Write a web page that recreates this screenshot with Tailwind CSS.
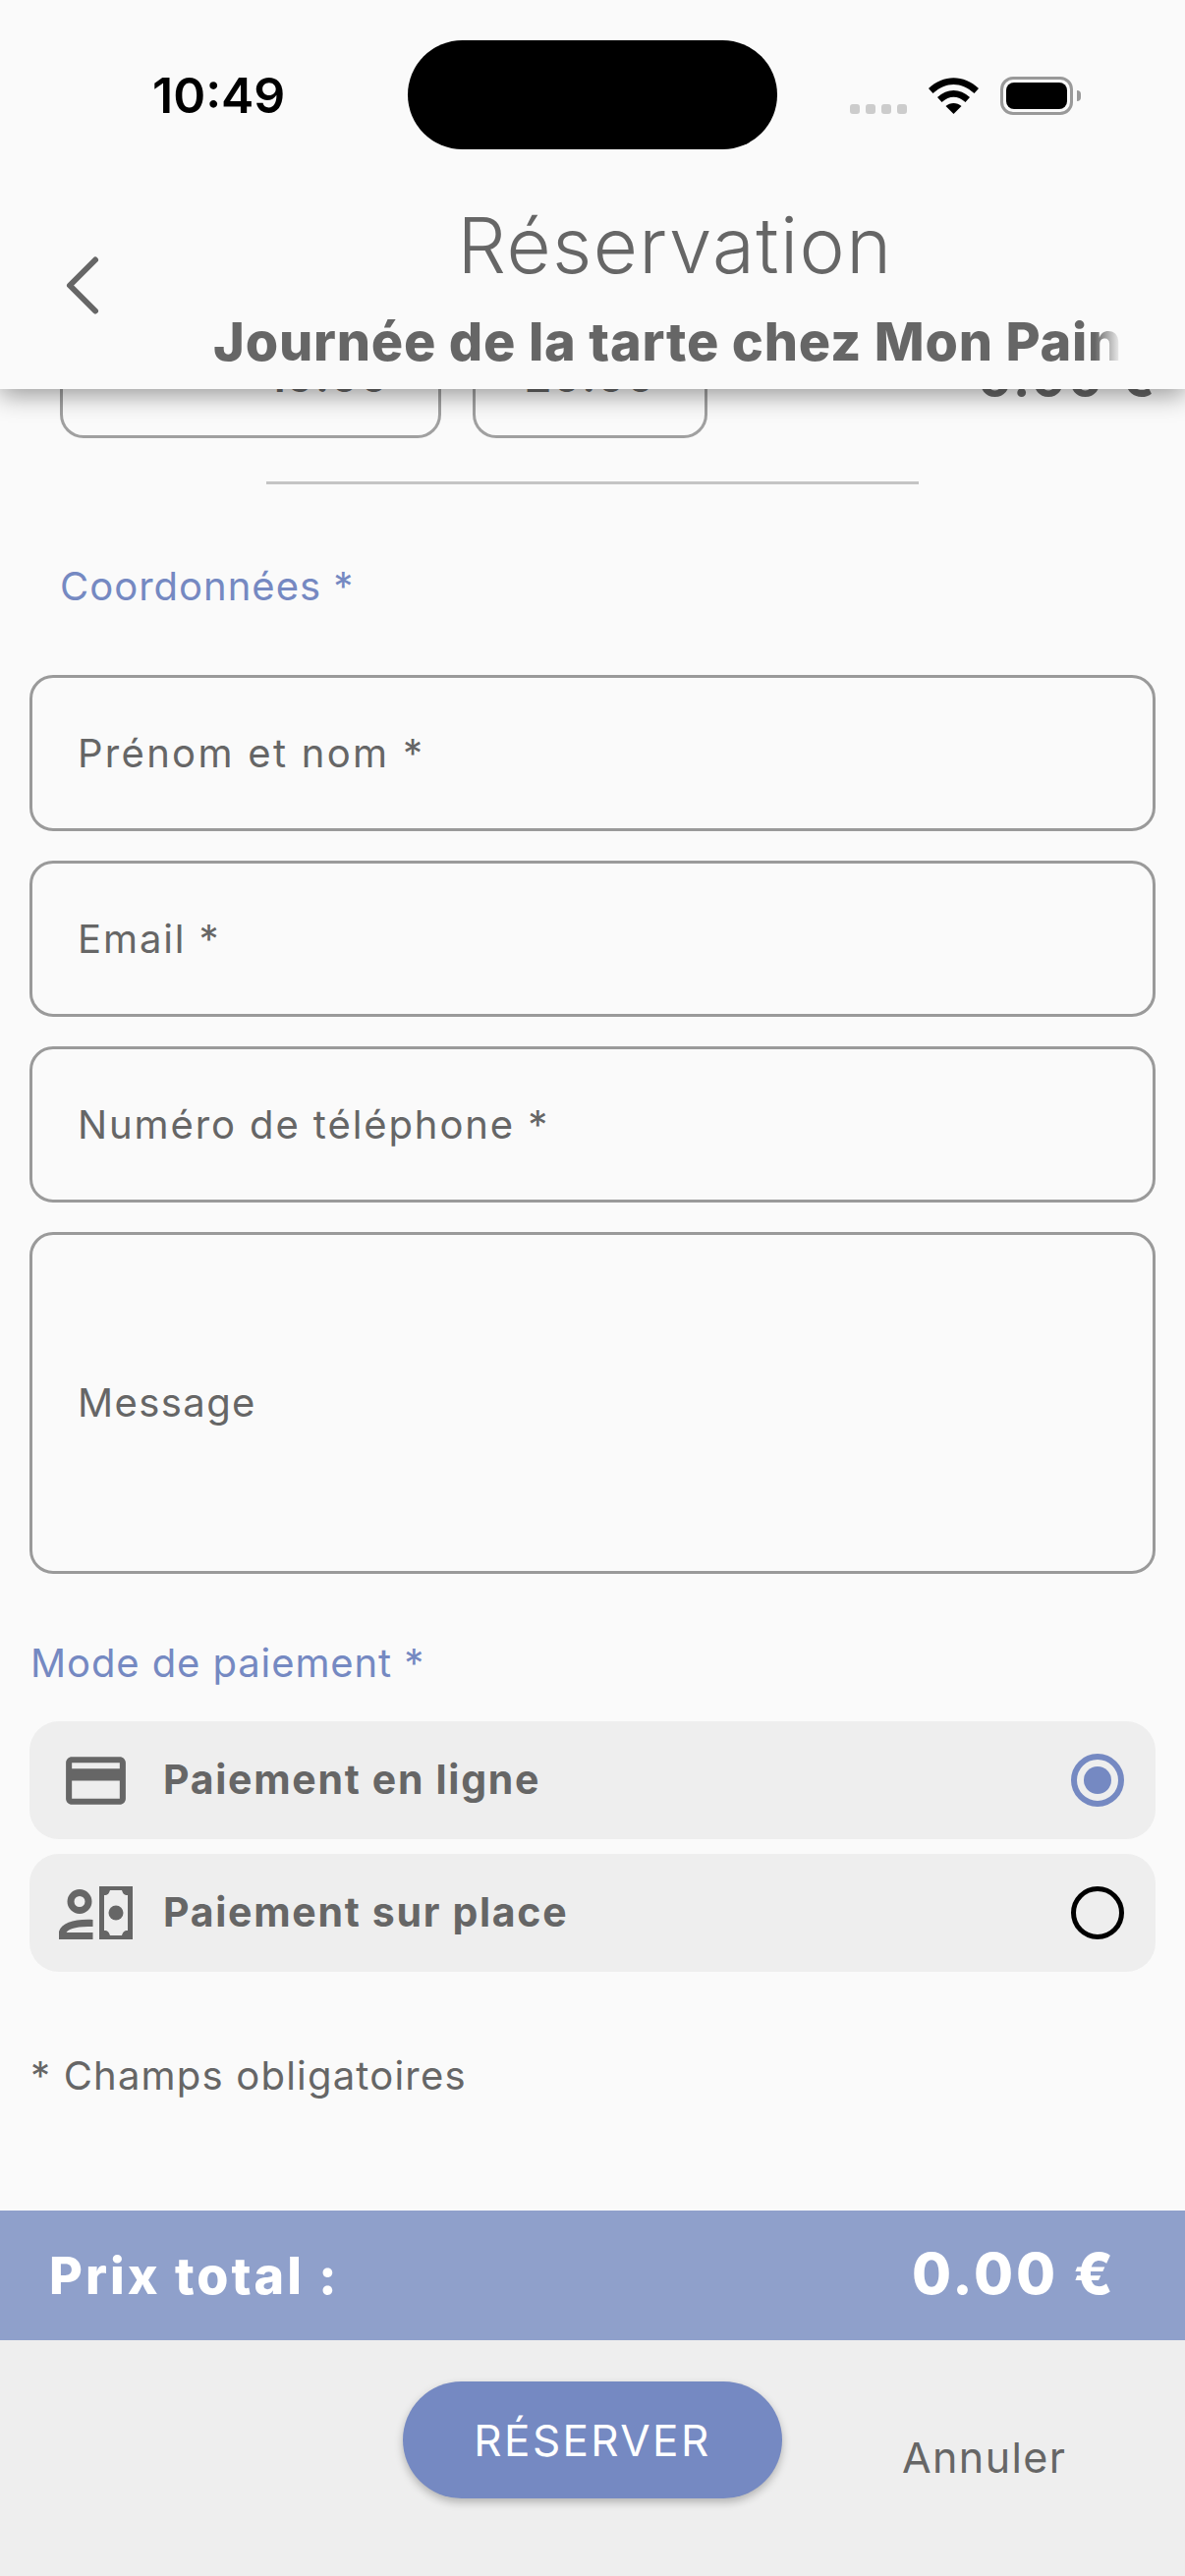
<!DOCTYPE html>
<html lang="fr">
<head>
    <meta charset="UTF-8">
    <title>Réservation</title>
    <script src="https://cdn.jsdelivr.net/npm/@tailwindcss/browser@4"></script>
</head>
<body class="bg-[#fafafa] font-['Inter',sans-serif] text-[#666666]">
<div class="w-[1206px] h-[2622px] flex flex-col overflow-hidden relative">

    <!-- app bar, lies over the scrolled content -->
    <header class="h-[396px] shrink-0 bg-[#fafafa] relative z-10 shadow-[0_6px_24px_rgba(0,0,0,0.4)]">
        <div class="flex items-start h-[160px]">
            <span class="ml-[155px] mt-[67px] w-[135px] text-[50px] leading-[60px] font-semibold text-black whitespace-nowrap">10:49</span>
            <div class="ml-[125px] mt-[41px] w-[376px] h-[111px] rounded-full bg-black"></div>
            <div class="ml-[74px] mt-[106px] flex gap-[6px]">
                <i class="w-[10px] h-[10px] rounded-[3px] bg-[#cccccc]"></i>
                <i class="w-[10px] h-[10px] rounded-[3px] bg-[#cccccc]"></i>
                <i class="w-[10px] h-[10px] rounded-[3px] bg-[#cccccc]"></i>
                <i class="w-[10px] h-[10px] rounded-[3px] bg-[#cccccc]"></i>
            </div>
            <svg class="ml-[22px] mt-[79px]" width="51" height="37" viewBox="0 0 51 37" fill="#000">
                <path d="M0 11 C15 -3.500 36 -3.500 51 11 L46.500 16 C33 4 18 4 4.500 16 Z"/>
                <path d="M9 20 C19 10.500 32 10.500 42 20 L37.500 25 C29.500 18 21.500 18 13.500 25 Z"/>
                <path d="M17.500 29 C22 25 29 25 33.500 29 L25.500 37 Z"/>
            </svg>
            <div class="ml-[22px] mt-[78px] w-[74px] h-[39px] rounded-[13px] border-[3px] border-[#999999] p-[3px]">
                <div class="w-full h-full rounded-[8px] bg-black"></div>
            </div>
            <div class="ml-[4px] mt-[92px] w-[4px] h-[11px] rounded-r-full bg-[#999999]"></div>
        </div>
        <div class="flex">
            <svg class="ml-[64px] mt-[98px]" width="40" height="65" viewBox="0 0 40 65" fill="none" stroke="#666666" stroke-width="6" stroke-linecap="round" stroke-linejoin="round">
                <path d="M33 6.500 L7 32.500 L33 58.500"/>
            </svg>
            <div class="ml-[113px] w-[925px] flex flex-col items-center">
                <h1 class="mt-[50px] ml-[15px] h-[80px] text-[78px] leading-[80px] font-light tracking-[1.400px] whitespace-nowrap">Réservation</h1>
                <p class="mt-[25px] w-full whitespace-nowrap text-[54px] leading-[66px] font-extrabold tracking-[0.800px] bg-clip-text text-transparent bg-[linear-gradient(to_right,#666666_97%,#fafafa)]">Journée de la tarte chez Mon Pain</p>
            </div>
        </div>
    </header>

    <!-- scrolled content -->
    <main class="flex-1 flex flex-col">
        <div class="flex items-start">
            <div class="ml-[61px] -mt-[20px] w-[388px] h-[70px] rounded-b-[24px] border-[3px] border-t-0 border-[#a0a0a0] text-right pr-[50px] text-[44px] leading-[14px] font-semibold tracking-[1px]">19:00</div>
            <div class="ml-[32px] -mt-[20px] w-[239px] h-[70px] rounded-b-[24px] border-[3px] border-t-0 border-[#a0a0a0] text-center text-[44px] leading-[14px] font-semibold tracking-[1px]">20:00</div>
            <div class="ml-[275px] -mt-[25px] text-[52px] leading-[30px] font-bold tracking-[2.500px] whitespace-nowrap">0.00 €</div>
        </div>
        <div class="ml-[271px] mt-[44px] w-[664px] h-[3px] bg-[#c4c4c4]"></div>

        <p class="ml-[61px] mt-[80px] text-[40px] leading-[48px] tracking-[1px] text-[#7589c2]">Coordonnées *</p>

        <div class="mx-[30px] mt-[66px] flex flex-col gap-[30px] text-[40px] tracking-[1.900px]">
            <div class="h-[159px] flex items-center pl-[46px] rounded-[24px] border-[3px] border-[#9a9a9a] tracking-[2.300px]">Prénom et nom *</div>
            <div class="h-[159px] flex items-center pl-[46px] rounded-[24px] border-[3px] border-[#9a9a9a]">Email *</div>
            <div class="h-[159px] flex items-center pl-[46px] rounded-[24px] border-[3px] border-[#9a9a9a]">Numéro de téléphone *</div>
            <div class="h-[348px] flex items-center pl-[46px] rounded-[24px] border-[3px] border-[#9a9a9a] tracking-[1.400px]">Message</div>
        </div>

        <p class="ml-[31px] mt-[67px] text-[40px] leading-[48px] tracking-[0.900px] text-[#7589c2]">Mode de paiement *</p>

        <div class="mx-[30px] mt-[35px] flex flex-col gap-[15px] text-[41px] font-bold tracking-[1.700px]">
            <div class="h-[120px] rounded-[30px] bg-[#eeeeee] flex items-center">
                <svg class="ml-[31px]" width="73" height="73" viewBox="0 0 24 24" fill="#666666"><path d="M20 4H4c-1.110 0-1.990.89-1.990 2L2 18c0 1.110.89 2 2 2h16c1.110 0 2-.89 2-2V6c0-1.110-.89-2-2-2zm0 14H4v-6h16v6zm0-10H4V6h16v2z"/></svg>
                <span class="ml-[32px]">Paiement en ligne</span>
                <span class="ml-auto mr-[32px] w-[54px] h-[54px] rounded-full border-[6px] border-[#7589c2] flex items-center justify-center"><i class="w-[28px] h-[28px] rounded-full bg-[#7589c2]"></i></span>
            </div>
            <div class="h-[120px] rounded-[30px] bg-[#eeeeee] flex items-center">
                <svg class="ml-[30px]" width="75" height="54" viewBox="0 0 75 54" fill="#666666">
                    <path fill-rule="evenodd" d="M21 3a12.500 12.500 0 1 1 0 25a12.500 12.500 0 0 1 0-25zm0 7a5.500 5.500 0 1 0 0 11a5.500 5.500 0 0 0 0-11z"/>
                    <path d="M34.500 34 V41 C20 41 11 42 7.500 47 H34.500 V54 H0 V46 C3 37 16 33 34.500 34 Z"/>
                    <path fill-rule="evenodd" d="M41 0H75V54H41ZM46 9V45C50 45 51 47 52 50H64C65 47 66 45 70 45V9C66 9 65 7 64 4H52C51 7 50 9 46 9Z"/>
                    <circle cx="58" cy="27" r="7.500"/>
                </svg>
                <span class="ml-[31px]">Paiement sur place</span>
                <span class="ml-auto mr-[32px] w-[54px] h-[54px] rounded-full border-[5px] border-black"></span>
            </div>
        </div>

        <p class="ml-[31px] mt-[82px] text-[40px] leading-[48px] tracking-[1.200px]">* Champs obligatoires</p>

        <div class="mt-[113px] h-[132px] shrink-0 bg-[#8fa0cb] flex items-center justify-between pl-[50px] pr-[70px] text-white font-extrabold">
            <span class="text-[52px] tracking-[3px] mt-[2px]">Prix total :</span>
            <span class="text-[58px] -mt-[4px] tracking-[3px]">0.00 €</span>
        </div>

        <div class="flex-1 bg-[#eeeeee] flex items-start">
            <button class="ml-[410px] mt-[42px] w-[386px] h-[119px] rounded-full bg-[#7589c2] text-white text-[44px] tracking-[2.400px] shadow-[0_4px_8px_rgba(0,0,0,0.25)]">RÉSERVER</button>
            <span class="ml-[122px] mt-[93px] text-[43px] leading-[52px] tracking-[1.400px]">Annuler</span>
        </div>
    </main>
</div>
</body>
</html>
